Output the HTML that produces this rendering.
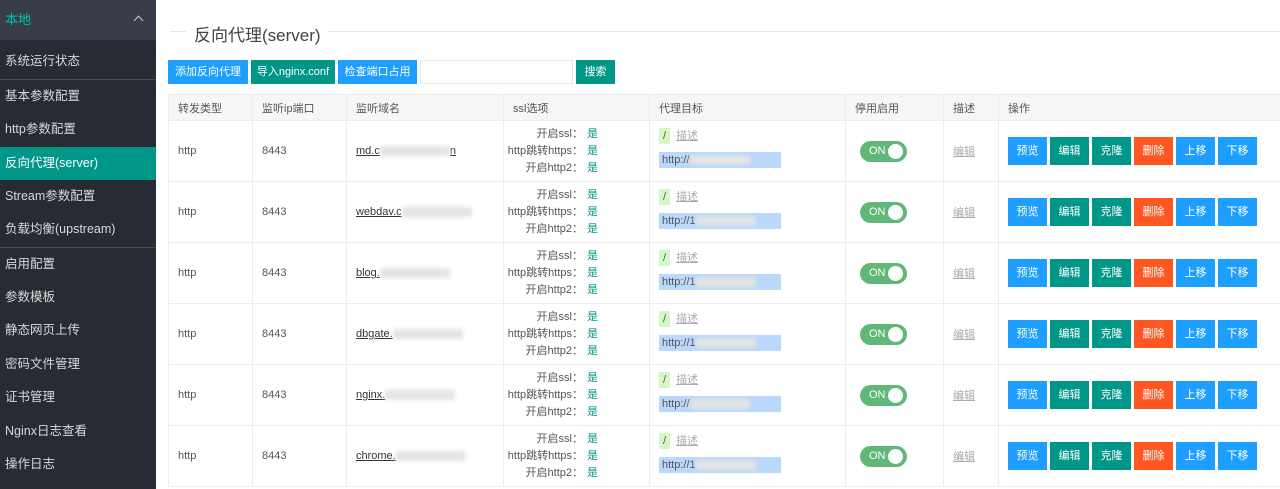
<!DOCTYPE html>
<html><head><meta charset="utf-8">
<style>
*{margin:0;padding:0;box-sizing:border-box}
body{width:1280px;height:489px;overflow:hidden;background:#fff;font-family:"Liberation Sans","Noto Sans CJK SC",sans-serif;font-size:12px;color:#555;position:relative}
.side{position:absolute;left:0;top:0;width:156px;height:489px;background:#282b33}
.side .top{height:40px;background:#393d49;color:#00c2b0;font-size:13px;line-height:40px;padding-left:5px;position:relative}
.side .top:after{content:"";position:absolute;right:14px;top:17px;width:6px;height:6px;border-left:1.5px solid #ccc;border-top:1.5px solid #ccc;transform:rotate(45deg)}
.it{position:absolute;left:0;width:156px;height:33px;line-height:33px;padding-left:5px;color:#d8d8d8;font-size:12.5px}
.it.act{background:#009688;color:#fff}
.sep{position:absolute;left:0;width:156px;height:1px;background:#4a4d55}
.title{position:absolute;left:194px;top:21px;font-size:17px;color:#444}
.hl{position:absolute;top:31px;height:1px;background:#e6e6e6}
.btn{position:absolute;top:60px;height:24px;line-height:24px;color:#fff;font-size:11px;text-align:center}
.blue{background:#1e9fff}.teal{background:#009688}.red{background:#ff5722}
table{position:absolute;left:168px;top:94px;border-collapse:collapse;table-layout:fixed;width:1112px}
td,th{border:1px solid #ececec;font-weight:normal;text-align:left;padding-left:9px;font-size:11px;color:#555;overflow:visible}
th{height:26px;background:#f6f6f6}
td{height:61px}
td.ssl{padding:0}
.in{width:94px;display:flex;flex-direction:column;align-items:flex-end;line-height:17px;white-space:nowrap}
.in b{font-weight:normal;color:#009688;margin-left:4px}
td.pt{vertical-align:top;padding-top:6px}
.tag{display:inline-block;background:#d4f7c6;padding:0 4px;height:16px;line-height:16px;color:#555}
.desc{color:#aaa;text-decoration:underline;margin-left:6px}
.url{display:inline-block;margin-top:8px;width:122px;height:16px;line-height:16px;background:#b9d8fb;padding-left:3px;position:relative}
.sw{display:inline-block;width:47px;height:21px;border-radius:11px;background:#5fb878;color:#fff;line-height:21px;padding-left:9px;position:relative;font-size:11px}
.sw:after{content:"";position:absolute;right:4px;top:3px;width:15px;height:15px;border-radius:50%;background:#fff}
.ops span{display:inline-block;width:39px;height:28px;line-height:28px;text-align:center;color:#fff;margin-right:3px;font-size:11px}
.blur{display:inline-block;width:70px;height:10px;background:#e4e4e4;vertical-align:middle;filter:blur(2px)}
.dom{text-decoration:underline;color:#333}
</style></head><body>
<div class="side">
<div class="top">本地</div>
<div class="it" style="top:45px">系统运行状态</div>
<div class="sep" style="top:79px"></div>
<div class="it" style="top:80px">基本参数配置</div>
<div class="it" style="top:113px">http参数配置</div>
<div class="it act" style="top:147px">反向代理(server)</div>
<div class="it" style="top:180px">Stream参数配置</div>
<div class="it" style="top:213px">负载均衡(upstream)</div>
<div class="sep" style="top:247px"></div>
<div class="it" style="top:248px">启用配置</div>
<div class="it" style="top:281px">参数模板</div>
<div class="it" style="top:314px">静态网页上传</div>
<div class="it" style="top:348px">密码文件管理</div>
<div class="it" style="top:381px">证书管理</div>
<div class="it" style="top:415px">Nginx日志查看</div>
<div class="it" style="top:448px">操作日志</div>
</div>
<div class="hl" style="left:170px;width:16px"></div>
<div class="title">反向代理(server)</div>
<div class="hl" style="left:328px;width:952px"></div>
<div class="btn blue" style="left:168px;width:80px">添加反向代理</div>
<div class="btn teal" style="left:251px;width:84px">导入nginx.conf</div>
<div class="btn blue" style="left:338px;width:79px">检查端口占用</div>
<div style="position:absolute;left:420px;top:60px;width:153px;height:24px;border:1px solid #e6e6e6"></div>
<div class="btn teal" style="left:576px;width:39px">搜索</div>
<table>
<colgroup><col style="width:84px"><col style="width:94px"><col style="width:157px"><col style="width:146px"><col style="width:196px"><col style="width:98px"><col style="width:55px"><col style="width:282px"></colgroup>
<tr><th>转发类型</th><th>监听ip端口</th><th>监听域名</th><th>ssl选项</th><th>代理目标</th><th>停用启用</th><th>描述</th><th>操作</th></tr>
<tr><td>http</td><td>8443</td><td><span class="dom">md.c<span class="blur"></span>n</span></td><td class="ssl"><div class="in"><div>开启ssl：<b>是</b></div><div>http跳转https：<b>是</b></div><div>开启http2：<b>是</b></div></div></td><td class="pt"><span class="tag">/</span><span class="desc">描述</span><br><span class="url">http://<span class="blur" style="width:60px"></span></span></td><td style="padding-left:14px"><span class="sw">ON</span></td><td><span class="desc" style="margin:0">编辑</span></td><td class="ops"><span class="blue">预览</span><span class="teal">编辑</span><span class="teal">克隆</span><span class="red">删除</span><span class="blue">上移</span><span class="blue">下移</span></td></tr>
<tr><td>http</td><td>8443</td><td><span class="dom">webdav.c<span class="blur"></span></span></td><td class="ssl"><div class="in"><div>开启ssl：<b>是</b></div><div>http跳转https：<b>是</b></div><div>开启http2：<b>是</b></div></div></td><td class="pt"><span class="tag">/</span><span class="desc">描述</span><br><span class="url">http://1<span class="blur" style="width:60px"></span></span></td><td style="padding-left:14px"><span class="sw">ON</span></td><td><span class="desc" style="margin:0">编辑</span></td><td class="ops"><span class="blue">预览</span><span class="teal">编辑</span><span class="teal">克隆</span><span class="red">删除</span><span class="blue">上移</span><span class="blue">下移</span></td></tr>
<tr><td>http</td><td>8443</td><td><span class="dom">blog.<span class="blur"></span></span></td><td class="ssl"><div class="in"><div>开启ssl：<b>是</b></div><div>http跳转https：<b>是</b></div><div>开启http2：<b>是</b></div></div></td><td class="pt"><span class="tag">/</span><span class="desc">描述</span><br><span class="url">http://1<span class="blur" style="width:60px"></span></span></td><td style="padding-left:14px"><span class="sw">ON</span></td><td><span class="desc" style="margin:0">编辑</span></td><td class="ops"><span class="blue">预览</span><span class="teal">编辑</span><span class="teal">克隆</span><span class="red">删除</span><span class="blue">上移</span><span class="blue">下移</span></td></tr>
<tr><td>http</td><td>8443</td><td><span class="dom">dbgate.<span class="blur"></span></span></td><td class="ssl"><div class="in"><div>开启ssl：<b>是</b></div><div>http跳转https：<b>是</b></div><div>开启http2：<b>是</b></div></div></td><td class="pt"><span class="tag">/</span><span class="desc">描述</span><br><span class="url">http://1<span class="blur" style="width:60px"></span></span></td><td style="padding-left:14px"><span class="sw">ON</span></td><td><span class="desc" style="margin:0">编辑</span></td><td class="ops"><span class="blue">预览</span><span class="teal">编辑</span><span class="teal">克隆</span><span class="red">删除</span><span class="blue">上移</span><span class="blue">下移</span></td></tr>
<tr><td>http</td><td>8443</td><td><span class="dom">nginx.<span class="blur"></span></span></td><td class="ssl"><div class="in"><div>开启ssl：<b>是</b></div><div>http跳转https：<b>是</b></div><div>开启http2：<b>是</b></div></div></td><td class="pt"><span class="tag">/</span><span class="desc">描述</span><br><span class="url">http://<span class="blur" style="width:60px"></span></span></td><td style="padding-left:14px"><span class="sw">ON</span></td><td><span class="desc" style="margin:0">编辑</span></td><td class="ops"><span class="blue">预览</span><span class="teal">编辑</span><span class="teal">克隆</span><span class="red">删除</span><span class="blue">上移</span><span class="blue">下移</span></td></tr>
<tr><td>http</td><td>8443</td><td><span class="dom">chrome.<span class="blur"></span></span></td><td class="ssl"><div class="in"><div>开启ssl：<b>是</b></div><div>http跳转https：<b>是</b></div><div>开启http2：<b>是</b></div></div></td><td class="pt"><span class="tag">/</span><span class="desc">描述</span><br><span class="url">http://1<span class="blur" style="width:60px"></span></span></td><td style="padding-left:14px"><span class="sw">ON</span></td><td><span class="desc" style="margin:0">编辑</span></td><td class="ops"><span class="blue">预览</span><span class="teal">编辑</span><span class="teal">克隆</span><span class="red">删除</span><span class="blue">上移</span><span class="blue">下移</span></td></tr>
</table>
</body></html>
